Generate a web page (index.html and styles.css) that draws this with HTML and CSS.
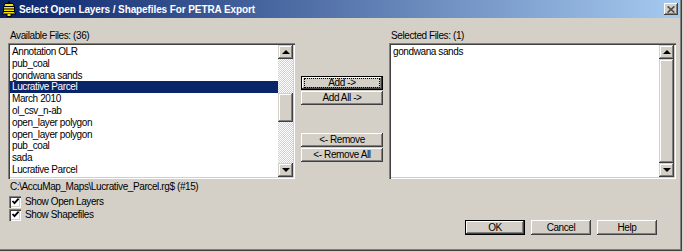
FILE: index.html
```html
<!DOCTYPE html>
<html>
<head>
<meta charset="utf-8">
<title>Select Open Layers / Shapefiles For PETRA Export</title>
<link rel="stylesheet" href="styles.css">
</head>
<body>
<div class="window">
  <div class="titlebar">
    <svg class="app-icon" width="16" height="16" viewBox="0 0 16 16">
      <path d="M4 2.5 H12 L13.5 6 V11 L15 13 H1 L2.5 11 V6 Z" fill="#f4e21a" stroke="#000" stroke-width="1"/>
      <path d="M3 5.5 H13 M3 8 H13 M3 10.5 H13" stroke="#000" stroke-width="1"/>
      <path d="M6 13 V15.5 H10 V13" fill="#f4e21a" stroke="#000" stroke-width="1"/>
      <path d="M7 1 H9" stroke="#000" stroke-width="1.4"/>
    </svg>
    <span class="title">Select Open Layers / Shapefiles For PETRA Export</span>
    <div class="close">
      <svg width="8" height="7" viewBox="0 0 8 7"><path d="M0.6 0.4 L7.4 6.6 M7.4 0.4 L0.6 6.6" stroke="#505050" stroke-width="1.7"/></svg>
    </div>
  </div>

  <div class="main">
    <div class="col col-left">
      <div class="label">Available Files: (36)</div>
      <div class="listbox">
        <ul class="items">
          <li>Annotation OLR</li>
          <li>pub_coal</li>
          <li>gondwana sands</li>
          <li class="selected">Lucrative Parcel</li>
          <li>March 2010</li>
          <li>ol_csv_n-ab</li>
          <li>open_layer polygon</li>
          <li>open_layer polygon</li>
          <li>pub_coal</li>
          <li>sada</li>
          <li>Lucrative Parcel</li>
        </ul>
        <div class="vscroll">
          <div class="sb-btn"><span class="arrow-up"></span></div>
          <div class="track checker"><div class="thumb thumb-pos"></div></div>
          <div class="sb-btn"><span class="arrow-down"></span></div>
        </div>
      </div>
      <div class="path">C:\AccuMap_Maps\Lucrative_Parcel.rg$ (#15)</div>
      <div class="check-row first">
        <span class="checkbox"><svg width="9" height="9" viewBox="0 0 9 9"><path d="M1.5 4 L3.5 6.2 L7.6 1.6" fill="none" stroke="#000" stroke-width="1.8"/></svg></span>
        <span class="check-label">Show Open Layers</span>
      </div>
      <div class="check-row">
        <span class="checkbox"><svg width="9" height="9" viewBox="0 0 9 9"><path d="M1.5 4 L3.5 6.2 L7.6 1.6" fill="none" stroke="#000" stroke-width="1.8"/></svg></span>
        <span class="check-label">Show Shapefiles</span>
      </div>
    </div>

    <div class="col col-mid">
      <div class="btn-group">
        <div class="btn default focus">Add -&gt;</div>
        <div class="btn">Add All -&gt;</div>
      </div>
      <div class="btn-group lower">
        <div class="btn">&lt;- Remove</div>
        <div class="btn">&lt;- Remove All</div>
      </div>
    </div>

    <div class="col col-right">
      <div class="label">Selected Files: (1)</div>
      <div class="listbox">
        <ul class="items">
          <li>gondwana sands</li>
        </ul>
        <div class="vscroll">
          <div class="sb-btn"><span class="arrow-up"></span></div>
          <div class="track"><div class="thumb full"></div></div>
          <div class="sb-btn"><span class="arrow-down"></span></div>
        </div>
      </div>
      <div class="actions">
        <div class="btn wide default">OK</div>
        <div class="btn wide">Cancel</div>
        <div class="btn wide">Help</div>
      </div>
    </div>
  </div>
</div>
</body>
</html>
```

FILE: styles.css
```css
* { box-sizing: border-box; }

html, body {
  margin: 0;
  padding: 0;
  background: #d4d0c8;
}

body {
  font-family: "Liberation Sans", Arial, sans-serif;
  font-size: 10px;
  letter-spacing: -0.4px;
  color: #000;
}

.window {
  width: 682px;
  height: 251px;
  background: #d4d0c8;
  box-shadow: inset -1px -1px #404040, inset -2px -2px #808080;
  display: flex;
  flex-direction: column;
}

/* title bar */
.titlebar {
  width: 680px;
  height: 18px;
  background: linear-gradient(to right, #0a246a, #a6caf0);
  display: flex;
  align-items: center;
  padding-left: 1px;
}

.app-icon { flex: none; }

.title {
  color: #fff;
  font-weight: bold;
  font-size: 10px;
  letter-spacing: -0.1px;
  margin-left: 2px;
  white-space: nowrap;
}

.close {
  margin-left: auto;
  margin-right: 2px;
  width: 14px;
  height: 12px;
  background: #d4d0c8;
  box-shadow: inset -1px -1px #404040, inset 1px 1px #fff, inset -2px -2px #808080;
  display: flex;
  align-items: center;
  justify-content: center;
}

/* main area */
.main {
  display: flex;
  padding-top: 11px;
  padding-left: 8px;
}

.col { display: flex; flex-direction: column; }
.col-left, .col-right { width: 287px; }
.col-mid {
  width: 94px;
  align-items: center;
  padding-top: 47px;
}

.label {
  height: 14px;
  line-height: 14px;
  padding-left: 2px;
  white-space: nowrap;
}

.listbox {
  height: 136px;
  padding: 2px;
  display: flex;
  background: #fff;
  box-shadow: inset 1px 1px #808080, inset 2px 2px #404040,
              inset -1px -1px #fff, inset -2px -2px #d4d0c8;
}

.items {
  list-style: none;
  margin: 0;
  padding: 1px 0 0 0;
  flex: 1;
  background: #fff;
}

.items li {
  height: 11.8px;
  line-height: 11.8px;
  padding-left: 2px;
  white-space: nowrap;
}

.items li.selected {
  background: #0a246a;
  color: #fff;
}

/* scrollbar */
.vscroll {
  width: 15px;
  display: flex;
  flex-direction: column;
  background: #d4d0c8;
}

.sb-btn {
  height: 14px;
  flex: none;
  background: #d4d0c8;
  box-shadow: inset -1px -1px #404040, inset 1px 1px #d4d0c8,
              inset -2px -2px #808080, inset 2px 2px #fff;
  display: flex;
  align-items: center;
  justify-content: center;
}

.arrow-up, .arrow-down {
  width: 0;
  height: 0;
  border-left: 4px solid transparent;
  border-right: 4px solid transparent;
}
.arrow-up { border-bottom: 4px solid #000; margin-top: -1px; }
.arrow-down { border-top: 4px solid #000; }

.track {
  flex: 1;
  display: flex;
  flex-direction: column;
}

.checker {
  background-color: #d4d0c8;
  background-image: conic-gradient(#fff 25%, #d4d0c8 0 50%, #fff 0 75%, #d4d0c8 0);
  background-size: 2px 2px;
}

.thumb {
  background: #d4d0c8;
  box-shadow: inset -1px -1px #404040, inset 1px 1px #d4d0c8,
              inset -2px -2px #808080, inset 2px 2px #fff;
}
.thumb-pos { margin-top: 34px; height: 29px; }
.thumb.full { flex: 1; }

/* lower left */
.path {
  margin-top: 1px;
  height: 13px;
  line-height: 13px;
  padding-left: 2px;
  white-space: nowrap;
}

.check-row {
  height: 13px;
  display: flex;
  align-items: center;
}
.check-row.first { margin-top: 2px; }

.checkbox {
  width: 12px;
  height: 12px;
  margin-left: 1px;
  background: #fff;
  box-shadow: inset 1px 1px #808080, inset 2px 2px #404040,
              inset -1px -1px #fff, inset -2px -2px #d4d0c8;
  display: flex;
  align-items: center;
  justify-content: center;
}

.check-label {
  margin-left: 4px;
  line-height: 13px;
  white-space: nowrap;
}

/* buttons */
.btn-group {
  display: flex;
  flex-direction: column;
  gap: 1px;
}
.btn-group.lower { margin-top: 28px; }

.btn {
  position: relative;
  width: 82px;
  height: 14px;
  line-height: 14px;
  text-align: center;
  white-space: nowrap;
  background: #d4d0c8;
  box-shadow: inset -1px -1px #404040, inset 1px 1px #fff,
              inset -2px -2px #808080, inset 2px 2px #d4d0c8;
}

.btn.default {
  box-shadow: inset 0 0 0 1px #000, inset -2px -2px #404040, inset 2px 2px #fff,
              inset -3px -3px #808080;
}

.btn.focus::after {
  content: "";
  position: absolute;
  left: 3px;
  top: 2px;
  right: 3px;
  bottom: 2px;
  border: 1px dotted #000;
}

.actions {
  margin-top: 41px;
  padding-right: 19px;
  display: flex;
  justify-content: flex-end;
  gap: 6px;
}

.btn.wide {
  width: 60px;
  height: 15px;
  line-height: 15px;
}
```
